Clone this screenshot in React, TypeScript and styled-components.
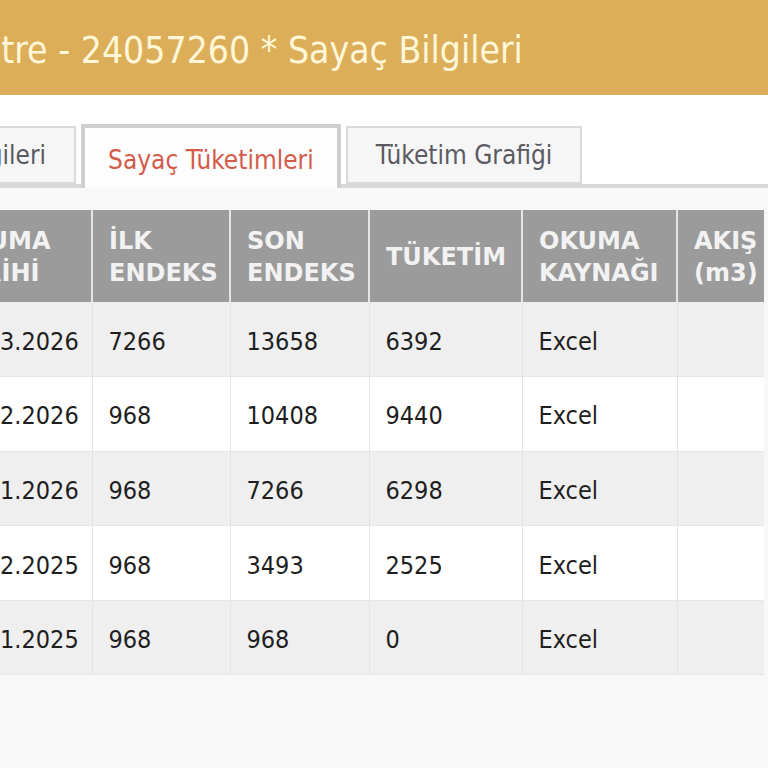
import React from "react";
import styled, { createGlobalStyle } from "styled-components";

const Global = createGlobalStyle`
  html, body { margin: 0; padding: 0; overflow: hidden; background: #f8f8f8; }
  body { font-family: "DejaVu Sans Condensed", "DejaVu Sans", sans-serif; }
`;

const Page = styled.div`
  margin-left: -160px;
  width: 1100px;
`;

const TitleBar = styled.header`
  height: 95px;
  background: #dcae5a;
  display: flex;
  align-items: center;
  padding-left: 112px;
  box-shadow: 0 2px 2px rgba(0, 0, 0, 0.08);
`;

const Title = styled.h1`
  margin: 0;
  font-family: "DejaVu Sans Condensed", "DejaVu Sans", sans-serif;
  font-weight: normal;
  font-size: 37px;
  color: #fff7d8;
  padding-top: 6px;
`;

const TabArea = styled.div`
  background: #ffffff;
  padding: 29px 0 0 11px;
`;

const TabStrip = styled.div`
  display: flex;
  align-items: flex-end;
  gap: 5px;
  border-bottom: 4px solid #d8d8d8;
`;

const Tab = styled.div<{ $active?: boolean }>`
  display: flex;
  align-items: center;
  box-sizing: border-box;
  font-size: 26px;
  color: ${(p) => (p.$active ? "#d45b4b" : "#5a5a62")};
  background: ${(p) => (p.$active ? "#fdfdfd" : "#f6f6f6")};
  ${(p) =>
    p.$active
      ? `
    height: 64px;
    padding: 4px 23px 0;
    border: 4px solid #cfcfcf;
    border-bottom: none;
    margin-bottom: -4px;
  `
      : `
    height: 58px;
    padding: 0 28px;
    border: 2px solid #dadada;
  `}
`;

const TableWrap = styled.div`
  padding: 22px 0 0 94px;
`;

const Table = styled.table`
  border-collapse: collapse;
  table-layout: fixed;
  width: 830px;
`;

const HeadCell = styled.th<{ $w: number }>`
  width: ${(p) => p.$w}px;
  height: 92px;
  box-sizing: border-box;
  background: #9b9b9b;
  color: #f2f2f2;
  font-family: "DejaVu Sans", "Verdana", sans-serif;
  font-weight: bold;
  font-size: 24px;
  line-height: 32px;
  text-align: left;
  vertical-align: middle;
  padding: 2px 10px 0 16px;
  border-left: 2px solid #e4e4e4;
  &:first-child { border-left: none; }
`;

const Row = styled.tr<{ $alt: boolean }>`
  background: ${(p) => (p.$alt ? "#efefef" : "#ffffff")};
  border-bottom: 1px solid #e6e6e6;
`;

const Cell = styled.td`
  height: 74.6px;
  box-sizing: border-box;
  padding: 4px 10px 0 16px;
  font-size: 25px;
  color: #1e1e1e;
  vertical-align: middle;
  border-left: 1px solid #e4e4e4;
  &:first-child { border-left: none; }
`;

const columns = [
  { label: "OKUMA TARİHİ", w: 158 },
  { label: "İLK ENDEKS", w: 138 },
  { label: "SON ENDEKS", w: 139 },
  { label: "TÜKETİM", w: 153 },
  { label: "OKUMA KAYNAĞI", w: 155 },
  { label: "AKIŞ (m3)", w: 87 },
];

const rows = [
  ["01.03.2026", "7266", "13658", "6392", "Excel", ""],
  ["01.02.2026", "968", "10408", "9440", "Excel", ""],
  ["01.01.2026", "968", "7266", "6298", "Excel", ""],
  ["01.12.2025", "968", "3493", "2525", "Excel", ""],
  ["01.11.2025", "968", "968", "0", "Excel", ""],
];

export default function App() {
  return (
    <>
      <Global />
      <Page>
        <TitleBar>
          <Title>Metre - 24057260 * Sayaç Bilgileri</Title>
        </TitleBar>
        <TabArea>
          <TabStrip>
            <Tab>Sayaç Bilgileri</Tab>
            <Tab $active>Sayaç Tüketimleri</Tab>
            <Tab>Tüketim Grafiği</Tab>
          </TabStrip>
        </TabArea>
        <TableWrap>
          <Table>
            <thead>
              <tr>
                {columns.map((c) => (
                  <HeadCell key={c.label} $w={c.w}>
                    {c.label}
                  </HeadCell>
                ))}
              </tr>
            </thead>
            <tbody>
              {rows.map((r, i) => (
                <Row key={i} $alt={i % 2 === 0}>
                  {r.map((v, j) => (
                    <Cell key={j}>{v}</Cell>
                  ))}
                </Row>
              ))}
            </tbody>
          </Table>
        </TableWrap>
      </Page>
    </>
  );
}
